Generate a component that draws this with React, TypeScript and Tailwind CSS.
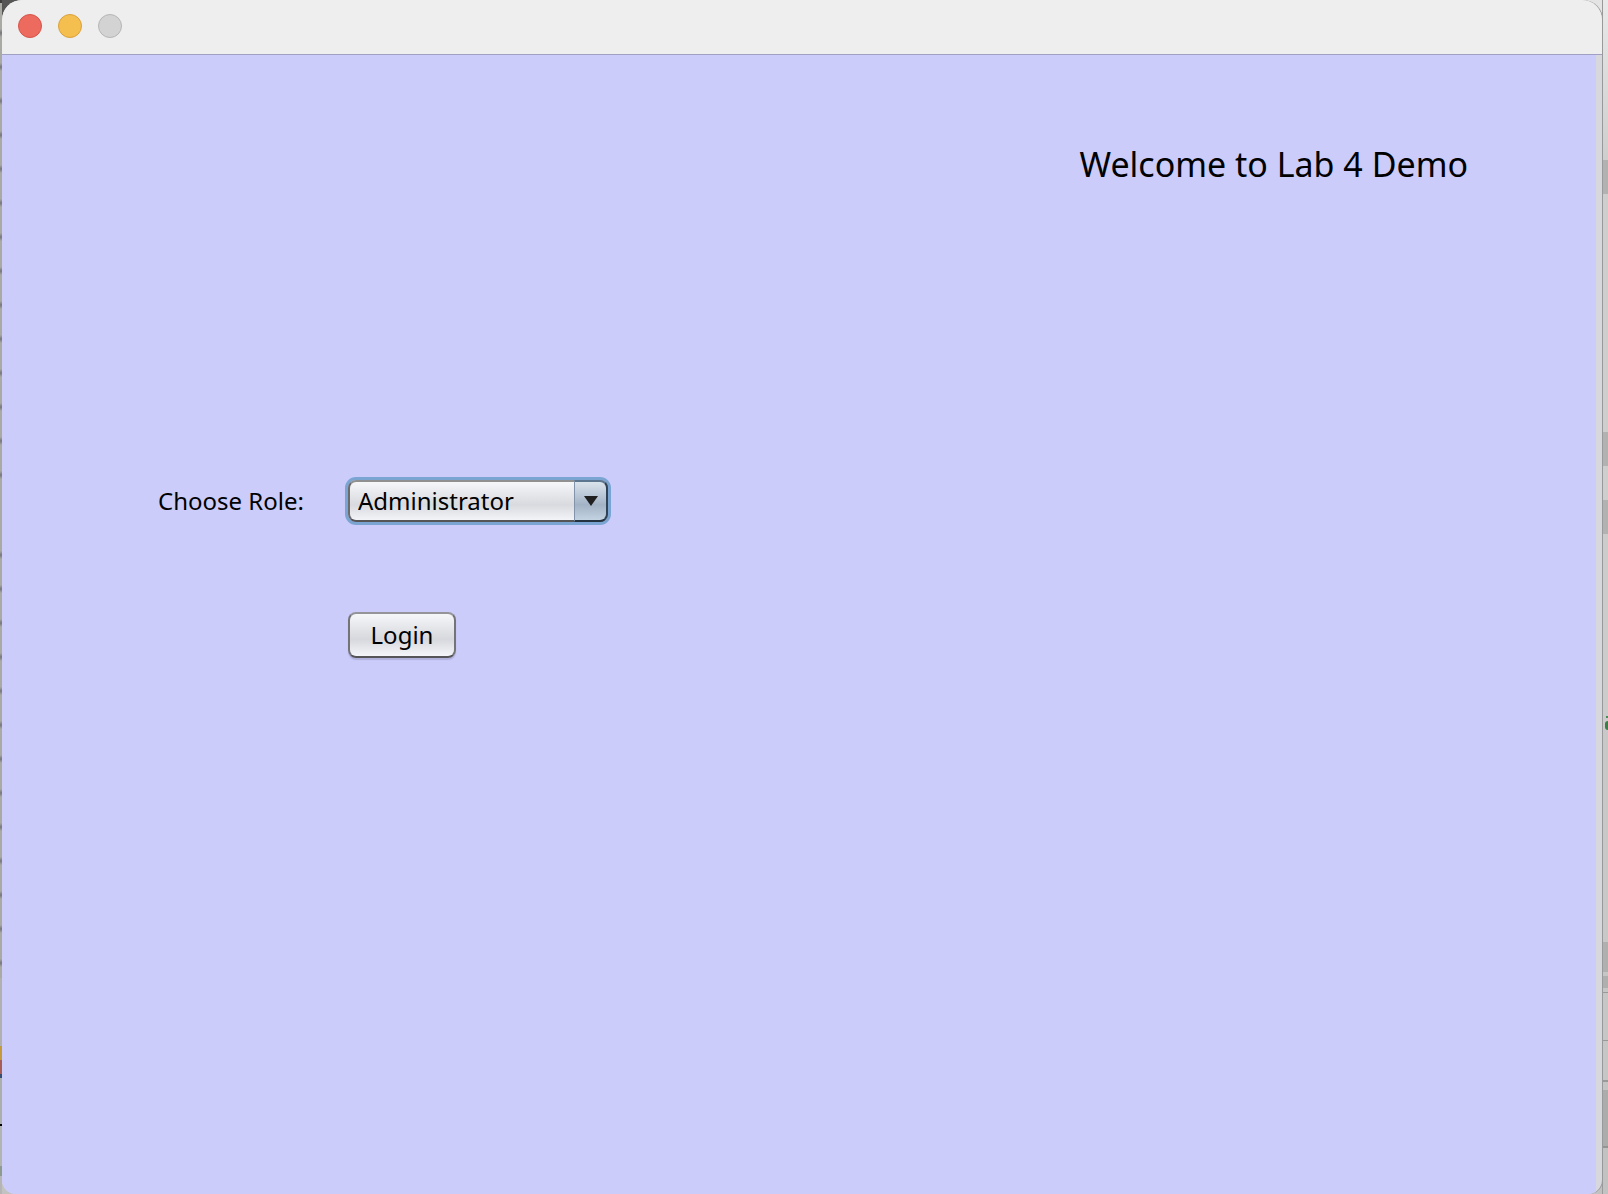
import { useState } from 'react';

const leftMarks = [
  'h-[3px] bg-[#3c3c3c]',
  'h-[497px] bg-[linear-gradient(#a9aaa4,#a9aaa4_26px,#77777b_30px,#a9aaa4_34px)] bg-[length:2px_34px]',
  'h-[25px] bg-[#a9aaa4]',
  'h-[453px] bg-[linear-gradient(#a9aaa4,#a9aaa4_26px,#77777b_30px,#a9aaa4_34px)] bg-[length:2px_34px]',
  'h-[68px] bg-[#b0b0b0]',
  'h-[14px] bg-[#c49a3c]',
  'h-[14px] bg-[#a85c58]',
  'h-1 bg-[#34506e]',
  'h-[46px] bg-[#acaea9]',
  'h-0.5 bg-black',
  'h-10 bg-[#b2b4b0]',
  'h-2.5 bg-[#8d9a8d]',
  'flex-1 bg-[#b5b5b5]',
];

const rightMarks = [
  'h-[160px] bg-linear-to-b from-[#e9e9e9] to-[#cecece]',
  'h-[34px] bg-[#b2b2b2]',
  'h-[238px] bg-[#cecece]',
  'h-[34px] bg-[#b2b2b2]',
  'h-[34px] bg-[#cecece]',
  'h-[34px] bg-[#b2b2b2]',
  'h-[182px] bg-[#cccccc]',
  'h-0.5 ml-[3px] bg-[#4d8a55]',
  'h-[3px] bg-[#cccccc]',
  'h-[9px] ml-0.5 rounded-l-full bg-[#3f7d46]',
  'h-[212px] bg-[#c8c8c8]',
  'h-[30px] bg-[#b0b0b0]',
  'h-1 bg-[#c6c6c6]',
  'h-3 bg-[#afafaf]',
  'h-1 bg-[#c6c6c6]',
  'h-px bg-[#999999]',
  'h-[47px] bg-[#c6c6c6]',
  'h-px bg-[#999999]',
  'h-[39px] bg-[#c6c6c6]',
  'h-0.5 bg-[#999999]',
  'h-2 bg-[#c4c4c4]',
  'h-14 bg-[#acacac]',
  'h-0.5 bg-[#949494]',
  'flex-1 bg-[#c2c2c2]',
];

function Strips({ items }: { items: string[] }) {
  return (
    <>
      {items.map((cls, i) => (
        <div key={i} className={cls} />
      ))}
    </>
  );
}

function TitleBar() {
  return (
    <header className="flex h-[55px] items-start gap-4 border-b border-[#a0a0c4] bg-[#eeeeee] pt-3.5 pl-4">
      <button type="button" aria-label="Close" className="size-6 rounded-full border border-[#d5544a] bg-[#ec6a5e]" />
      <button type="button" aria-label="Minimize" className="size-6 rounded-full border border-[#d9a03c] bg-[#f4bf4f]" />
      <button type="button" aria-label="Zoom" disabled className="size-6 rounded-full border border-[#b5b5b5] bg-[#d3d3d3]" />
    </header>
  );
}

function LoginForm() {
  const [role, setRole] = useState('Administrator');
  return (
    <form
      className="grid grid-cols-[190px_auto] items-center justify-start gap-y-[90px] pt-[291px] pl-[156px] text-2xl leading-8"
      onSubmit={(e) => e.preventDefault()}
    >
      <label htmlFor="role">Choose Role:</label>
      <div className="relative">
        <select
          id="role"
          value={role}
          onChange={(e) => setRole(e.target.value)}
          className="block h-[42px] w-[260px] appearance-none rounded-lg border-2 border-[#6c6c6c] border-t-[#909090] border-b-[#555555] bg-linear-to-b from-[#f6f7f9] via-[#d8dadf] via-60% to-[#f2f4f7] pr-9 pl-2 leading-8 ring-3 ring-[#7aa5d2] outline-none"
        >
          <option>Administrator</option>
        </select>
        <span className="pointer-events-none absolute top-0 right-0 flex h-[42px] w-[34px] items-center justify-center rounded-r-lg border-2 border-l border-t-[#5c7690] border-r-[#2f4256] border-b-[#25323f] border-l-[#8095aa] bg-linear-to-b from-[#dbe4ec] via-[#a3b3c6] via-60% to-[#c3d3e2]">
          <svg className="h-2.5 w-3.5" viewBox="0 0 14 10" aria-hidden="true">
            <path d="M0 0H14L7 10Z" fill="#202020" />
          </svg>
        </span>
      </div>
      <button
        type="submit"
        className="col-start-2 h-[46px] w-[108px] rounded-lg border-2 border-[#747477] border-t-[#959599] border-b-[#555558] bg-linear-to-b from-[#f6f7f9] via-[#d6d8dd] via-60% to-[#f4f6f9] shadow-[0_2px_1px_#b0b0dc]"
      >
        Login
      </button>
    </form>
  );
}

export default function App() {
  return (
    <div className="flex min-h-screen overflow-hidden bg-[#c2c2c2] font-['Noto_Sans',sans-serif] text-black">
      <div className="flex w-0.5 shrink-0 flex-col">
        <Strips items={leftMarks} />
      </div>
      <div className="flex min-w-0 flex-1 bg-[linear-gradient(to_right,#555_20px,#e4e4e4_20px)] bg-[length:100%_30px] bg-no-repeat">
        <div className="flex flex-1 flex-col overflow-hidden rounded-t-[20px] rounded-b-[14px] bg-[#d6d8dd] shadow-[1px_0_0_#999999]">
          <TitleBar />
          <main className="mr-1.5 flex-1 bg-[#cbccfa]">
            <h1 className="pt-[84px] pr-[128px] text-right text-[34px] leading-[50px]">Welcome to Lab 4 Demo</h1>
            <LoginForm />
          </main>
        </div>
      </div>
      <div className="flex w-1.5 shrink-0 flex-col overflow-hidden border-l border-[#999999] bg-[#cccccc]">
        <Strips items={rightMarks} />
      </div>
    </div>
  );
}
